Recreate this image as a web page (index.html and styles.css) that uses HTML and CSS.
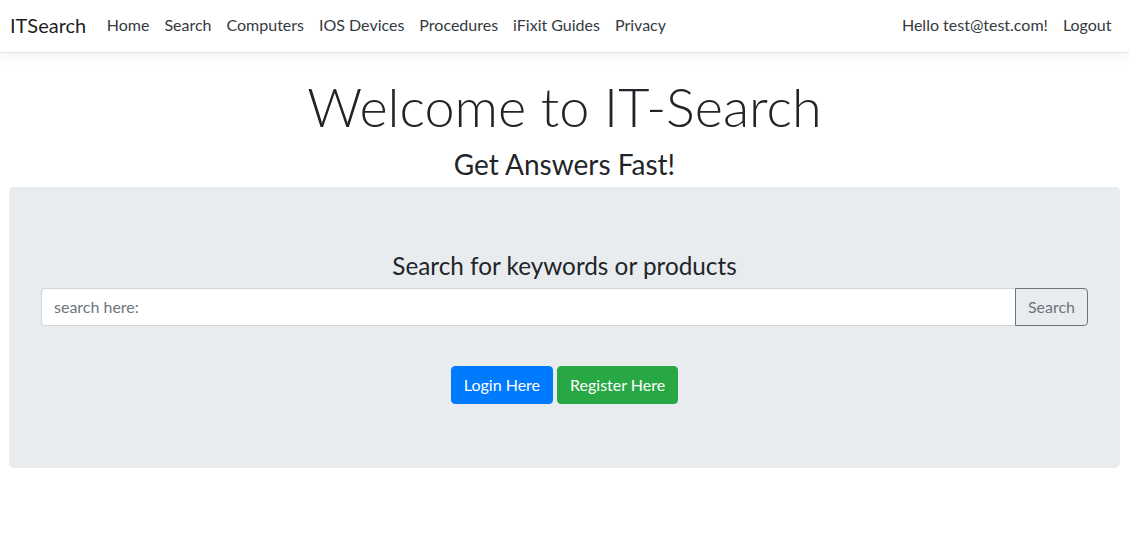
FILE: index.html
```html
<!DOCTYPE html>
<html lang="en">
<head>
<meta charset="utf-8">
<title>ITSearch</title>
<link rel="stylesheet" href="styles.css">
</head>
<body>
<header class="navbar">
  <a class="brand" href="#">ITSearch</a>
  <nav class="nav-main">
    <a class="nav-link" href="#">Home</a>
    <a class="nav-link" href="#">Search</a>
    <a class="nav-link" href="#">Computers</a>
    <a class="nav-link" href="#">IOS Devices</a>
    <a class="nav-link" href="#">Procedures</a>
    <a class="nav-link" href="#">iFixit Guides</a>
    <a class="nav-link" href="#">Privacy</a>
  </nav>
  <nav class="nav-user">
    <a class="nav-link" href="#">Hello test@test.com!</a>
    <a class="nav-link" href="#">Logout</a>
  </nav>
</header>
<main class="main">
  <h1 class="display">Welcome to IT-Search</h1>
  <h3 class="subtitle">Get Answers Fast!</h3>
  <section class="jumbotron">
    <h4 class="search-title">Search for keywords or products</h4>
    <form class="input-group">
      <input class="form-control" type="text" placeholder="search here:">
      <button class="btn btn-outline" type="button">Search</button>
    </form>
    <div class="actions">
      <a class="btn btn-primary" href="#">Login Here</a>
      <a class="btn btn-success" href="#">Register Here</a>
    </div>
  </section>
</main>
</body>
</html>
```

FILE: styles.css
```css
* { box-sizing: border-box; }
html, body { margin: 0; padding: 0; }
body {
  font-family: "Lato", "Open Sans", Arial, sans-serif;
  font-size: 16px;
  line-height: 1.5;
  color: #212529;
  background: #fff;
}
a { text-decoration: none; }

.navbar {
  display: flex;
  align-items: center;
  height: 53px;
  padding: 0 10px 2px;
  background: #fff;
  border-bottom: 1px solid #e5e5e5;
  box-shadow: 0 .25rem .75rem rgba(0,0,0,.05);
}
.brand {
  font-size: 20px;
  color: rgba(0,0,0,.9);
  margin-right: 13px;
  line-height: 30px;
}
.nav-main { display: flex; flex: 1; }
.nav-user { display: flex; }
.nav-link {
  color: #343a40;
  padding: 8px 7.5px;
  font-size: 16px;
}

.main { padding: 20px 11px 0 11px; }
.display {
  margin: 0 0 8px;
  text-align: center;
  font-size: 54px;
  font-weight: 300;
  line-height: 67px;
}
.subtitle {
  margin: 0 0 5px;
  text-align: center;
  font-size: 28px;
  font-weight: 400;
  line-height: 1.2;
}
.jumbotron {
  background: #e9ecef;
  border-radius: 4.8px;
  padding: 64px 32px;
  margin: 0 -2px 0 -2px;
}
.search-title {
  margin: 0 0 8px;
  text-align: center;
  font-size: 24.3px;
  font-weight: 400;
  line-height: 29px;
}
.input-group { display: flex; }
.form-control {
  flex: 1;
  height: 38px;
  padding: 6px 12px;
  font: inherit;
  font-size: 16px;
  color: #495057;
  background: #fff;
  border: 1px solid #ced4da;
  border-radius: 4px 0 0 4px;
  outline: none;
}
.form-control::placeholder { color: #6c757d; }
.btn {
  display: inline-block;
  font: inherit;
  font-size: 16px;
  line-height: 24px;
  padding: 6px 12px;
  border: 1px solid transparent;
  border-radius: 4px;
  cursor: pointer;
}
.btn-outline {
  color: #6c757d;
  background: transparent;
  border-color: #6c757d;
  border-radius: 0 4px 4px 0;
  margin-left: -1px;
}
.actions {
  margin-top: 40px;
  display: flex;
  justify-content: center;
  gap: 4px;
}
.btn-primary { color: #fff; background: #007bff; border-color: #007bff; }
.btn-success { color: #fff; background: #28a745; border-color: #28a745; }
```
